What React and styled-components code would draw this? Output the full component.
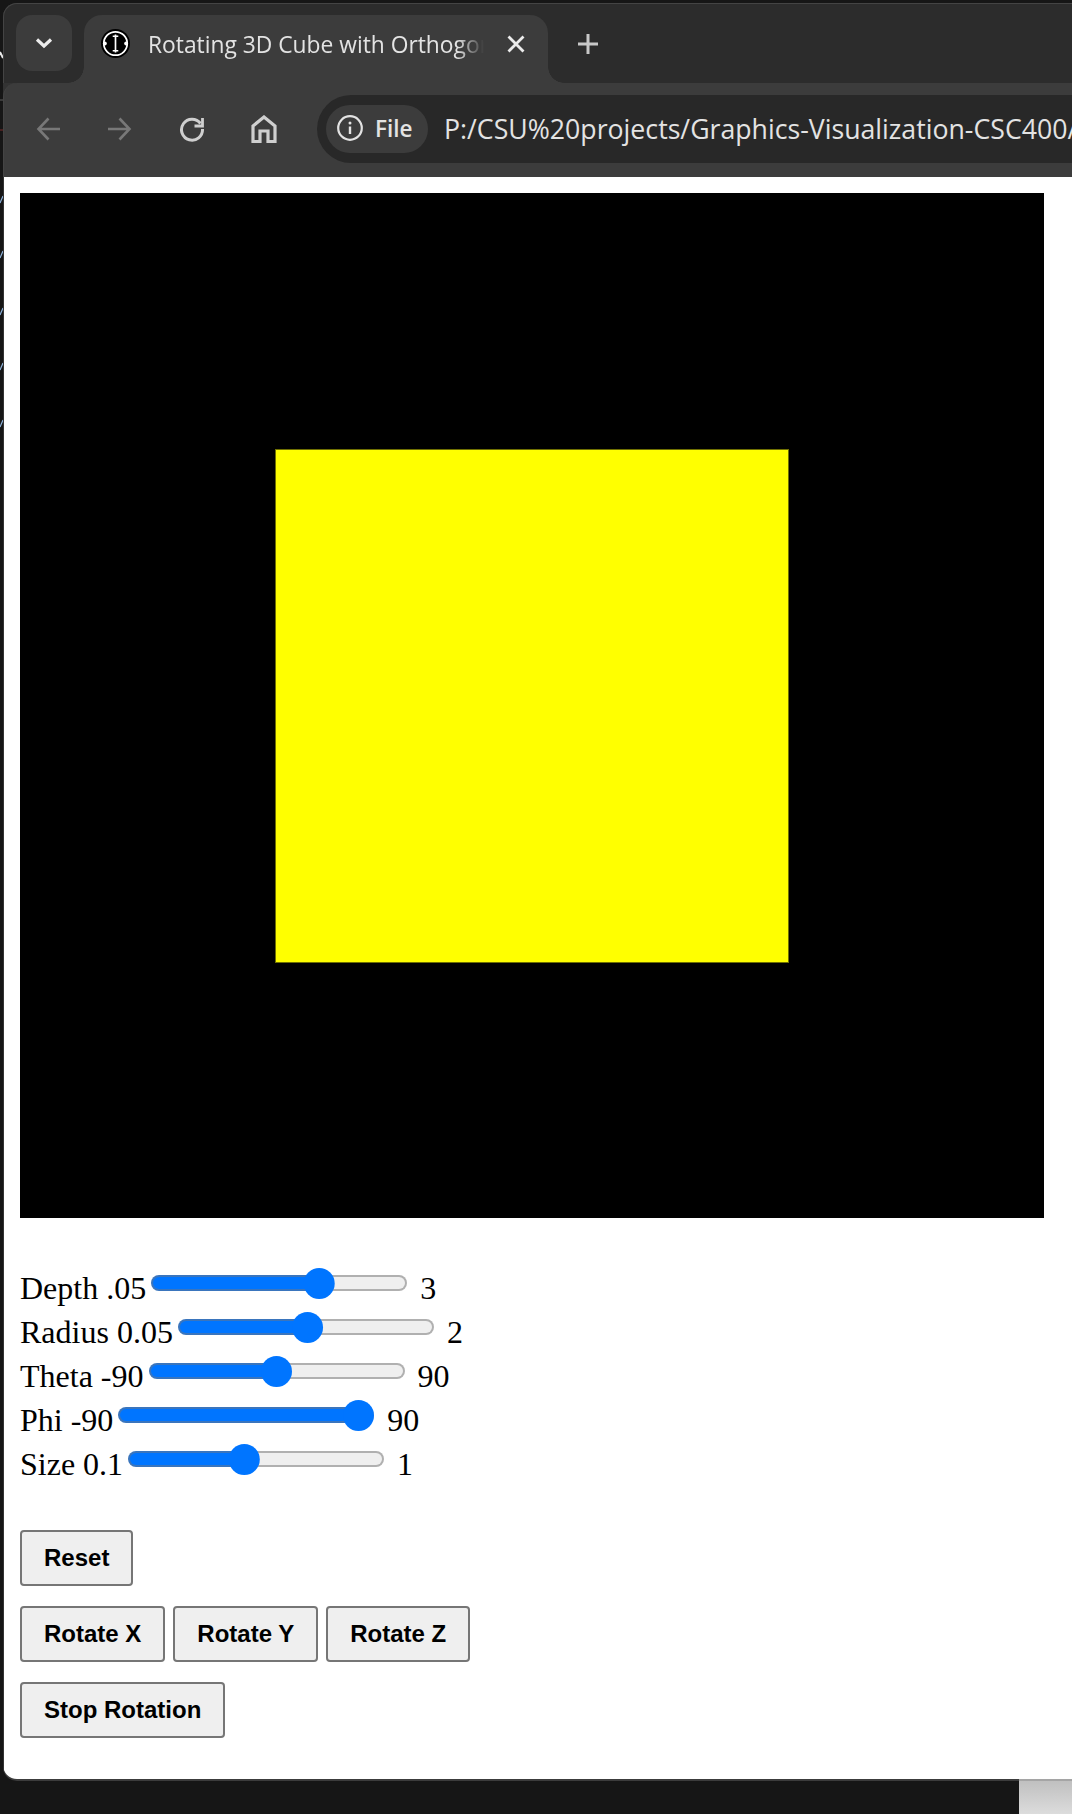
import React from "react";
import styled, { createGlobalStyle } from "styled-components";

const Global = createGlobalStyle`
  html, body { margin: 0; padding: 0; background: #161616; }
  body { width: 1072px; height: 1814px; overflow: hidden; }
  * { box-sizing: border-box; }
`;

const Desktop = styled.div`
  position: relative;
  width: 1072px;
  height: 1814px;
  padding-top: 3px;
  background: #161616;
  overflow: hidden;
`;

const BackdropMarks = styled.svg`
  position: absolute;
  left: 0;
  top: 0;
  width: 4px;
  height: 500px;
`;

const Window = styled.div`
  position: relative;
  margin-left: 3px;
  width: 1069px;
  height: 1776px;
  border-radius: 14px 0 0 14px;
  overflow: hidden;
  background: #333;
`;

const WindowEdge = styled.div`
  height: 1778px;
  border-radius: 14px 0 0 14px;
  background: #3c3c3c;
  margin-left: 3px;
`;

const TabStrip = styled.div`
  height: 80px;
  padding: 11px 0 0 12px;
  display: flex;
  align-items: flex-start;
  background: #2c2c2c;
  border-top: 1px solid #444;
  border-left: 1px solid #444;
  border-radius: 14px 0 0 0;
`;

const TabSearch = styled.div`
  flex: none;
  width: 56px;
  height: 56px;
  border-radius: 16px;
  background: #3c3c3c;
  display: flex;
  align-items: center;
  justify-content: center;
`;

const Tab = styled.div`
  position: relative;
  flex: none;
  margin-left: 12px;
  width: 464px;
  height: 68px;
  padding: 0 0 11px 17px;
  border-radius: 18px 18px 0 0;
  background: #3c3c3c;
  display: flex;
  align-items: center;

  &::before, &::after {
    content: "";
    position: absolute;
    bottom: 0;
    width: 16px;
    height: 16px;
  }
  &::before {
    left: -16px;
    background: radial-gradient(circle at 0 0, transparent 15.5px, #3c3c3c 16px);
  }
  &::after {
    right: -16px;
    background: radial-gradient(circle at 100% 0, transparent 15.5px, #3c3c3c 16px);
  }
`;

const Favicon = styled.svg`
  flex: none;
  width: 29px;
  height: 29px;
`;

const TabTitle = styled.span`
  flex: none;
  margin-left: 18px;
  width: 336px;
  padding-top: 2px;
  overflow: hidden;
  white-space: nowrap;
  font: 400 22.8px "Open Sans", sans-serif;
  color: #e3e3e3;
  -webkit-mask-image: linear-gradient(90deg, #000 92%, transparent 100%);
  mask-image: linear-gradient(90deg, #000 92%, transparent 100%);
`;

const TabClose = styled.span`
  flex: none;
  margin-left: 21px;
  display: flex;
  color: #ececec;
`;

const NewTab = styled.span`
  flex: none;
  margin: 18px 0 0 29px;
  display: flex;
  color: #c8c8c8;
`;

const Toolbar = styled.div`
  position: relative;
  height: 94px;
  padding: 12px 0 14px 31px;
  display: flex;
  align-items: center;
  background: #3c3c3c;
  border-radius: 14px 0 0 0;
  border-left: 1px solid #444;
`;

const NavButton = styled.span`
  flex: none;
  width: ${(p) => p.$w}px;
  display: flex;
  color: ${(p) => (p.$off ? "#787878" : "#cfcfcf")};
`;

const Omnibox = styled.div`
  flex: 1;
  min-width: 0;
  height: 68px;
  padding: 0 0 0 9px;
  display: flex;
  align-items: center;
  overflow: hidden;
  background: #282828;
  border-radius: 34px 0 0 34px;
`;

const SecurityChip = styled.div`
  flex: none;
  width: 102px;
  height: 48px;
  padding: 0 0 2px 11px;
  display: flex;
  align-items: center;
  gap: 12px;
  border-radius: 24px;
  background: #3c3c3c;
  color: #e3e3e3;
  font: 600 22.5px "Open Sans", sans-serif;
`;

const Url = styled.span`
  flex: none;
  margin-left: 16px;
  padding-bottom: 2px;
  white-space: nowrap;
  color: #e3e3e3;
  font: 400 26.7px "Open Sans", sans-serif;
`;

const Page = styled.main`
  height: 1602px;
  margin-left: 1px;
  padding: 16px 0 0 16px;
  background: #fff;
  font-family: "Liberation Serif", serif;
  color: #000;
`;

const Viewport = styled.div`
  width: 1024px;
  height: 1025px;
  background: #000;
  display: flex;
  align-items: center;
  justify-content: center;
`;

const CubeFace = styled.div`
  width: 514px;
  height: 514px;
  border: 1px solid #707000;
  background: #ffff00;
`;

const Controls = styled.div`
  margin-top: 48px;
  display: flex;
  flex-direction: column;
`;

const ControlRow = styled.div`
  height: 44px;
  display: flex;
  align-items: flex-start;
  font-size: 32px;
  line-height: 44px;
  white-space: nowrap;
`;

const Range = styled.input`
  appearance: none;
  -webkit-appearance: none;
  flex: none;
  width: 256px;
  height: 32px;
  margin: 1px 13px 0 5px;
  background: transparent;
  outline: none;

  &::-webkit-slider-runnable-track {
    height: 16px;
    border-radius: 8px;
    border: 2px solid transparent;
    background:
      linear-gradient(90deg, #0075ff calc(var(--fill) - 2px), #efefef calc(var(--fill) - 2px)) padding-box,
      linear-gradient(90deg, #3a75bd var(--fill), #b0b0b0 var(--fill)) border-box;
  }
  &::-webkit-slider-thumb {
    -webkit-appearance: none;
    width: 31px;
    height: 31px;
    margin-top: -9.5px;
    border-radius: 50%;
    background: #0075ff;
    border: none;
    transform: translateX(var(--nudge));
  }
`;

const ButtonRows = styled.div`
  margin-top: 44px;
  display: flex;
  flex-direction: column;
  gap: 20px;
`;

const ButtonRow = styled.div`
  display: flex;
  gap: 8px;
`;

const Action = styled.button`
  height: 56px;
  padding: 0 22px;
  border: 2px solid #767676;
  border-radius: 4px;
  background: #efefef;
  color: #000;
  font: 700 24px "Liberation Sans", sans-serif;
`;

const Footer = styled.div`
  position: absolute;
  right: 0;
  bottom: 0;
  width: 53px;
  height: 35px;
  border-top: 2px solid #a5a5a5;
  background: linear-gradient(180deg, #c0c0c0, #dcdcdc);
`;

const WindowStack = styled.div`
  position: relative;
  & > ${Window} {
    position: absolute;
    left: 0;
    top: 0;
  }
`;

const sliders = [
  { label: "Depth .05", max: "3", value: 67.8 },
  { label: "Radius 0.05", max: "2", value: 50.9 },
  { label: "Theta -90", max: "90", value: 50 },
  { label: "Phi -90", max: "90", value: 100 },
  { label: "Size 0.1", max: "1", value: 44.7 },
];

const Slider = ({ value }) => (
  <Range
    type="range"
    min="0"
    max="100"
    step="0.1"
    defaultValue={value}
    style={{
      "--fill": `${13 + (value / 100) * 225}px`,
      "--nudge": `${-2 + (value / 100) * 4}px`,
    }}
  />
);

const Chevron = () => (
  <svg width="18" height="12" viewBox="0 0 18 12" fill="none" stroke="#ececec" strokeWidth="3.2">
    <path d="M2 2.5 9 9l7-6.5" />
  </svg>
);

const Close = () => (
  <svg width="22" height="22" viewBox="0 0 22 22" stroke="currentColor" strokeWidth="2.8" fill="none">
    <path d="M3.5 3.5l15 15M18.5 3.5l-15 15" />
  </svg>
);

const Plus = () => (
  <svg width="22" height="22" viewBox="0 0 22 22" stroke="currentColor" strokeWidth="3" fill="none">
    <path d="M11 1v20M1 11h20" />
  </svg>
);

const ArrowL = () => (
  <svg width="28" height="26" viewBox="0 0 28 26" fill="none" stroke="currentColor" strokeWidth="2.6">
    <path d="M25 13H4M13.5 2.5 3.5 13l10 10.500" />
  </svg>
);

const ArrowR = () => (
  <svg width="28" height="26" viewBox="0 0 28 26" fill="none" stroke="currentColor" strokeWidth="2.6">
    <path d="M3 13h21M14.500 2.500 24.500 13l-10 10.500" />
  </svg>
);

const Reload = () => (
  <svg width="26" height="26" viewBox="0 0 26 26" fill="none" stroke="currentColor" strokeWidth="3">
    <path d="M21.500 7.500A10.500 10.500 0 1 0 23.500 13" />
    <path d="M23.500 2v8h-8" strokeWidth="2.800" />
  </svg>
);

const HomeIcon = () => (
  <svg width="26" height="28" viewBox="0 0 26 28" fill="none" stroke="currentColor" strokeWidth="3.200">
    <path d="M2 26.500V11L13 2l11 9v15.500h-7V16H9v10.500z" />
  </svg>
);

const Info = () => (
  <svg width="26" height="26" viewBox="0 0 26 26" fill="none" stroke="#e3e3e3" strokeWidth="2.200">
    <circle cx="13" cy="13" r="11.800" />
    <path d="M13 11.500v7.500" strokeWidth="2.400" />
    <circle cx="13" cy="8" r="1.500" fill="#e3e3e3" stroke="none" />
  </svg>
);

export default function App() {
  return (
    <Desktop>
      <Global />
      <BackdropMarks viewBox="0 0 4 500" fill="none" strokeWidth="1.200">
        <path d="M0 52l3 6" stroke="#e8e8e8" strokeWidth="2" />
        <path d="M0 100h4" stroke="#555" />
        <path d="M0 130h3" stroke="#6b2a2a" />
        <path d="M0 203l3-7" stroke="#8fb4dc" />
        <path d="M0 258l3-7" stroke="#8fb4dc" />
        <path d="M0 315l3-7" stroke="#8fb4dc" />
        <path d="M0 370l3-7" stroke="#8fb4dc" />
        <path d="M0 427l3-7" stroke="#8fb4dc" />
      </BackdropMarks>
      <WindowStack>
        <WindowEdge />
        <Window>
          <TabStrip>
            <TabSearch>
              <Chevron />
            </TabSearch>
            <Tab>
              <Favicon viewBox="0 0 26 26" fill="none">
                <circle cx="13" cy="13" r="13" fill="#000" />
                <circle cx="13" cy="13" r="10.500" stroke="#fff" strokeWidth="1.600" />
                <path d="M13 5v16M10.500 6.500h5M10.500 19.500h5" stroke="#fff" strokeWidth="1.500" />
                <circle cx="3.500" cy="13" r="1.700" fill="#fff" />
                <circle cx="22.500" cy="13" r="1.700" fill="#fff" />
              </Favicon>
              <TabTitle>Rotating 3D Cube with Orthogonal Projection</TabTitle>
              <TabClose>
                <Close />
              </TabClose>
            </Tab>
            <NewTab>
              <Plus />
            </NewTab>
          </TabStrip>
          <Toolbar>
            <NavButton $w={70} $off>
              <ArrowL />
            </NavButton>
            <NavButton $w={74} $off>
              <ArrowR />
            </NavButton>
            <NavButton $w={72}>
              <Reload />
            </NavButton>
            <NavButton $w={66}>
              <HomeIcon />
            </NavButton>
            <Omnibox>
              <SecurityChip>
                <Info />
                <span>File</span>
              </SecurityChip>
              <Url>P:/CSU%20projects/Graphics-Visualization-CSC400/</Url>
            </Omnibox>
          </Toolbar>
          <Page>
            <Viewport>
              <CubeFace />
            </Viewport>
            <Controls>
              {sliders.map((s) => (
                <ControlRow key={s.label}>
                  <span>{s.label}</span>
                  <Slider value={s.value} />
                  <span>{s.max}</span>
                </ControlRow>
              ))}
            </Controls>
            <ButtonRows>
              <ButtonRow>
                <Action>Reset</Action>
              </ButtonRow>
              <ButtonRow>
                <Action>Rotate X</Action>
                <Action>Rotate Y</Action>
                <Action>Rotate Z</Action>
              </ButtonRow>
              <ButtonRow>
                <Action>Stop Rotation</Action>
              </ButtonRow>
            </ButtonRows>
          </Page>
        </Window>
      </WindowStack>
      <Footer />
    </Desktop>
  );
}
